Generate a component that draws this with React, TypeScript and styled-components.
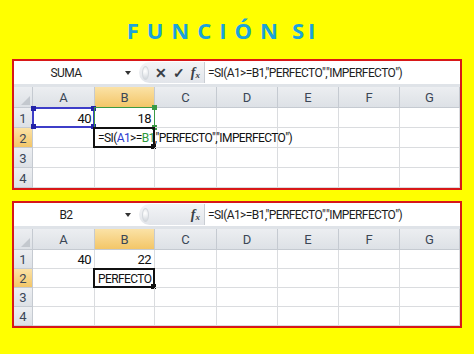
import styled, { createGlobalStyle } from "styled-components";

const GlobalStyle = createGlobalStyle`
  html, body {
    margin: 0;
    padding: 0;
    background: #ffff00;
  }
`;

const NARROW = `"Roboto", "Liberation Sans", sans-serif`;

const Page = styled.div`
  width: 474px;
  height: 354px;
  background: #ffff00;
  display: flex;
  flex-direction: column;
  align-items: center;
  overflow: hidden;
`;

const Title = styled.h1`
  margin: 0;
  height: 59px;
  display: flex;
  align-items: center;
  justify-content: center;
  font-family: "Open Sans", "Liberation Sans", sans-serif;
  font-weight: 700;
  font-size: 22px;
  letter-spacing: 8px;
  color: #1aa3dc;
  padding-right: 28px;
  padding-top: 1px;
  box-sizing: border-box;
  & > span {
    margin-left: 6px;
    letter-spacing: 4px;
  }
`;

const Panels = styled.div`
  display: flex;
  flex-direction: column;
  gap: 11px;
`;

const Panel = styled.div`
  width: 450px;
  box-sizing: border-box;
  border: 2px solid #d81818;
  background: #fff;
  font-family: ${NARROW};
  font-size: 12px;
  letter-spacing: -0.6px;
`;

const FormulaBar = styled.div`
  height: 23px;
  display: flex;
  align-items: center;
  background: #fff;
  border-bottom: 3px solid #dfe3e8;
  color: #1e1e1e;
`;

const NameBox = styled.div`
  width: 104px;
  text-align: center;
  padding-top: 1px;
`;

const DropArrow = styled.div`
  width: 0;
  height: 0;
  margin: 0 8px 0 7px;
  border-left: 3px solid transparent;
  border-right: 3px solid transparent;
  border-top: 4px solid #333;
`;

const Pill = styled.div`
  width: 66px;
  height: 21px;
  display: flex;
  align-items: center;
  gap: 6px;
  padding-left: 3px;
  box-sizing: border-box;
  border-radius: 11px 0 0 11px;
  background: linear-gradient(#f3f4f6, #e2e5ea);
  border-right: 1px solid #c9cdd3;
  letter-spacing: 0;
`;

const Knob = styled.div`
  width: 12px;
  height: 12px;
  border-radius: 50%;
  background: radial-gradient(circle at 40% 35%, #ffffff, #cfd4da);
  border: 1px solid #d3d7dc;
`;

const Glyph = styled.span<{ $hidden?: boolean }>`
  font-family: "Liberation Sans", sans-serif;
  font-size: 14px;
  font-weight: 700;
  color: #3a3f47;
  visibility: ${(p) => (p.$hidden ? "hidden" : "visible")};
`;

const Fx = styled.span`
  font-family: "Liberation Serif", serif;
  font-style: italic;
  font-weight: 700;
  font-size: 14px;
  color: #3a3f47;
  margin-left: auto;
  margin-right: 4px;
  & sub {
    font-size: 9px;
    vertical-align: -1px;
  }
`;

const FormulaText = styled.div`
  padding-left: 3px;
  padding-top: 1px;
  white-space: nowrap;
`;

const Grid = styled.div<{ $row: number }>`
  display: grid;
  grid-template-columns: 19px 62px 60px 62px 61px 61px 61px 1fr;
  grid-template-rows: 21px repeat(4, ${(p) => p.$row}px);
`;

const Corner = styled.div`
  background: linear-gradient(#eceef1, #dde1e6);
  border-right: 1px solid #c5cad1;
  border-bottom: 1px solid #c5cad1;
  position: relative;
  &::after {
    content: "";
    position: absolute;
    right: 2px;
    bottom: 2px;
    border-left: 9px solid transparent;
    border-bottom: 9px solid #c3c8ce;
  }
`;

const Header = styled.div<{ $active?: boolean }>`
  display: flex;
  align-items: center;
  justify-content: center;
  font-size: 13px;
  letter-spacing: 0;
  color: #3b4656;
  background: ${(p) =>
    p.$active
      ? "linear-gradient(#fbe2a6, #f3c668)"
      : "linear-gradient(#eceef1, #dde1e6)"};
  border-right: 1px solid #c5cad1;
  border-bottom: 1px solid #c5cad1;
  padding-top: 1px;
`;

const Cell = styled.div<{ $right?: boolean }>`
  position: relative;
  display: flex;
  align-items: center;
  justify-content: ${(p) => (p.$right ? "flex-end" : "flex-start")};
  padding: 1px 3px 0;
  font-size: 13px;
  border-right: 1px solid #dadcdf;
  border-bottom: 1px solid #dadcdf;
  color: #111;
  white-space: nowrap;
`;

const Outline = styled.div<{ $color: string; $w: number }>`
  position: absolute;
  inset: -1px;
  border: ${(p) => p.$w}px solid ${(p) => p.$color};
  pointer-events: none;
`;

const Dot = styled.div<{ $color: string; $x: "l" | "r"; $y: "t" | "b" }>`
  position: absolute;
  width: 5px;
  height: 5px;
  background: ${(p) => p.$color};
  ${(p) => (p.$x === "l" ? "left: -3px;" : "right: -3px;")}
  ${(p) => (p.$y === "t" ? "top: -3px;" : "bottom: -3px;")}
`;

const ActiveBox = styled.div`
  position: absolute;
  inset: -1px -1px -1px -2px;
  border: 2px solid #111;
  pointer-events: none;
`;

const CellText = styled.span`
  position: relative;
  z-index: 2;
  font-size: 12px;
`;

const Ref = styled.span<{ $color: string }>`
  color: ${(p) => p.$color};
`;

const COLS = ["A", "B", "C", "D", "E", "F", "G"];

type SheetProps = {
  name: string;
  editing: boolean;
  b1: string;
  rowHeight: number;
};

function Sheet({ name, editing, b1, rowHeight }: SheetProps) {
  return (
    <Panel>
      <FormulaBar>
        <NameBox>{name}</NameBox>
        <DropArrow />
        <Pill>
          <Knob />
          <Glyph $hidden={!editing}>✕</Glyph>
          <Glyph $hidden={!editing}>✓</Glyph>
          <Fx>
            f<sub>x</sub>
          </Fx>
        </Pill>
        <FormulaText>=SI(A1&gt;=B1,"PERFECTO","IMPERFECTO")</FormulaText>
      </FormulaBar>
      <Grid $row={rowHeight}>
        <Corner />
        {COLS.map((c) => (
          <Header key={c} $active={c === "B"}>
            {c}
          </Header>
        ))}
        {[1, 2, 3, 4].map((r) => (
          <Row key={r} r={r} editing={editing} b1={b1} />
        ))}
      </Grid>
    </Panel>
  );
}

function Row({ r, editing, b1 }: { r: number; editing: boolean; b1: string }) {
  return (
    <>
      <Header $active={r === 2}>{r}</Header>
      {COLS.map((c) => {
        const key = `${c}${r}`;
        if (key === "A1")
          return (
            <Cell key={key} $right>
              40
              {editing && (
                <Outline $color="#3d3dc8" $w={2}>
                  <Dot $color="#2323a8" $x="l" $y="t" />
                  <Dot $color="#2323a8" $x="r" $y="t" />
                  <Dot $color="#2323a8" $x="l" $y="b" />
                  <Dot $color="#2323a8" $x="r" $y="b" />
                </Outline>
              )}
            </Cell>
          );
        if (key === "B1")
          return (
            <Cell key={key} $right>
              {b1}
              {editing && (
                <Outline $color="#3a9a45" $w={1}>
                  <Dot $color="#3a9a45" $x="r" $y="t" />
                  <Dot $color="#3a9a45" $x="r" $y="b" />
                </Outline>
              )}
            </Cell>
          );
        if (key === "B2")
          return (
            <Cell key={key}>
              <CellText>
                {editing ? (
                  <>
                    =SI(<Ref $color="#2b3bd0">A1</Ref>&gt;=
                    <Ref $color="#2f9a3c">B1</Ref>,"PERFECTO","IMPERFECTO")
                  </>
                ) : (
                  "PERFECTO"
                )}
              </CellText>
              <ActiveBox>
                <Dot $color="#111" $x="r" $y="b" />
              </ActiveBox>
            </Cell>
          );
        return <Cell key={key} />;
      })}
    </>
  );
}

export default function App() {
  return (
    <Page>
      <GlobalStyle />
      <Title>
        FUNCIÓN<span>SI</span>
      </Title>
      <Panels>
        <Sheet name="SUMA" editing b1="18" rowHeight={20} />
        <Sheet name="B2" editing={false} b1="22" rowHeight={19} />
      </Panels>
    </Page>
  );
}
